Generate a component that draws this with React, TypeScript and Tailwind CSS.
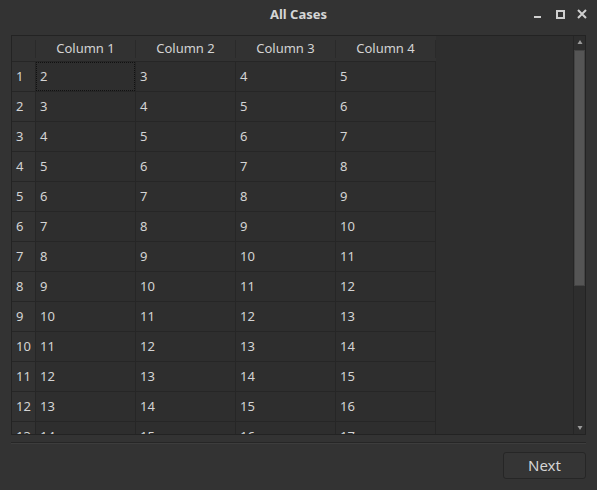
const COLS = ["Column 1", "Column 2", "Column 3", "Column 4"];
const ROWS = Array.from({ length: 13 }, (_, i) => i + 1);

function TitleBar() {
  return (
    <div className="relative h-[30px] flex items-center justify-center">
      <span className="text-[13px] font-bold text-[#d6d6d6]">All Cases</span>
      <div className="absolute right-[9px] top-[8px] flex items-center gap-[10px]">
        <svg width="12" height="12" viewBox="0 0 12 12">
          <rect x="2" y="8" width="7" height="2" fill="#d0d0d0" />
        </svg>
        <svg width="12" height="12" viewBox="0 0 12 12">
          <rect x="3" y="3" width="7" height="7" fill="none" stroke="#d0d0d0" strokeWidth="2" />
        </svg>
        <svg width="12" height="12" viewBox="0 0 12 12">
          <path d="M2 2 L10 10 M10 2 L2 10" stroke="#d0d0d0" strokeWidth="2" />
        </svg>
      </div>
    </div>
  );
}

function HeaderRow() {
  return (
    <div className="flex h-[26px] border-b border-[#262626] bg-[#323232]">
      <div className="w-[24px] flex items-center justify-end">
        <div className="w-px h-[18px] bg-[#2a2a2a]" />
      </div>
      {COLS.map((c) => (
        <div key={c} className="w-[100px] flex items-center">
          <span className="flex-1 text-center text-[13px] text-[#d4d4d4]">{c}</span>
          <div className="w-px h-[18px] bg-[#2a2a2a]" />
        </div>
      ))}
    </div>
  );
}

function DataRow({ n }: { n: number }) {
  return (
    <div className="flex h-[30px] border-b border-[#262626]">
      <div className="w-[24px] border-r border-[#262626] bg-[#323232] flex items-center pl-[4px] text-[13px] text-[#d4d4d4]">
        {n}
      </div>
      {[0, 1, 2, 3].map((j) => (
        <div
          key={j}
          className="relative w-[100px] border-r border-[#262626] flex items-center pl-[4px] text-[13px] text-[#d4d4d4]"
        >
          {n === 1 && j === 0 && (
            <div className="absolute inset-0 border border-dotted border-[#111]" />
          )}
          <span className="relative">{n + j + 1}</span>
        </div>
      ))}
    </div>
  );
}

export default function App() {
  return (
    <div
      className="w-[597px] h-[490px] bg-[#333333] flex flex-col overflow-hidden"
      style={{ fontFamily: '"Noto Sans", "DejaVu Sans", sans-serif' }}
    >
      <TitleBar />
      <div className="px-[11px] pt-[5px]">
        <div className="h-[400px] border border-[#232323] bg-[#2e2e2e] flex overflow-hidden">
          <div className="flex-1 overflow-hidden">
            <div className="w-[424px]">
              <HeaderRow />
              {ROWS.map((n) => (
                <DataRow key={n} n={n} />
              ))}
            </div>
          </div>
          <div className="w-[12px] flex flex-col items-center bg-[#2e2e2e] border-l border-[#262626]">
            <svg width="6" height="6" viewBox="0 0 6 6" className="mt-[3px]">
              <path d="M3 1 L5.5 5 L0.5 5 Z" fill="#9a9a9a" />
            </svg>
            <div className="mt-[5px] w-[11px] h-[236px] bg-[#555555] border border-[#444]" />
            <div className="flex-1" />
            <svg width="6" height="6" viewBox="0 0 6 6" className="mb-[3px]">
              <path d="M0.5 1 L5.5 1 L3 5 Z" fill="#9a9a9a" />
            </svg>
          </div>
        </div>
        <div className="mt-[7px] h-[2px] bg-[#262626] border-b border-[#3d3d3d]" />
        <div className="flex justify-end mt-[8px]">
          <button className="w-[83px] h-[27px] rounded-[3px] border border-[#262626] bg-[#353535] text-[15px] text-[#d4d4d4]">
            Next
          </button>
        </div>
      </div>
    </div>
  );
}
